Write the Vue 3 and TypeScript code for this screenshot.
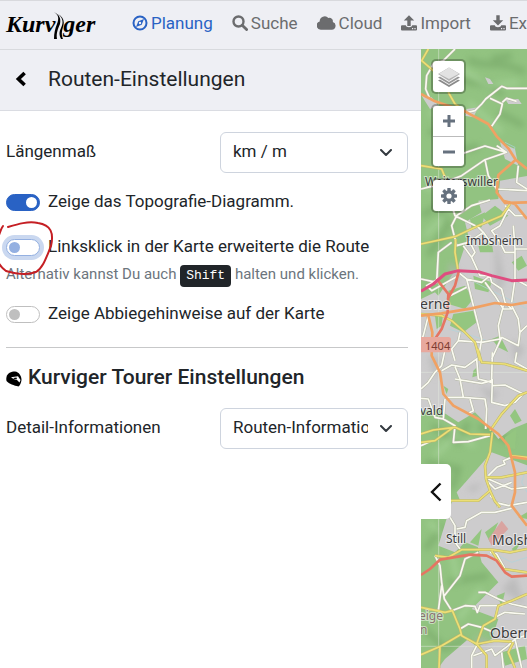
<script setup lang="ts">
import { ref } from 'vue'

interface NavItem {
  label: string
  icon: string
  active?: boolean
}

interface Place {
  name: string
  x: number
  y: number
  kind: string
}

const navItems: NavItem[] = [
  { label: 'Planung', icon: 'compass', active: true },
  { label: 'Suche', icon: 'search' },
  { label: 'Cloud', icon: 'cloud' },
  { label: 'Import', icon: 'upload' },
  { label: 'Export', icon: 'download' },
]

const places: Place[] = [
  { name: 'Weiterswiller', x: 4, y: 137, kind: 'village' },
  { name: 'Imbsheim', x: 45, y: 196, kind: 'village' },
  { name: 'erne', x: -1, y: 260, kind: 'town' },
  { name: 'vald', x: -1, y: 366, kind: 'village' },
  { name: 'Still', x: 25, y: 494, kind: 'village' },
  { name: 'Molsheim', x: 71, y: 496, kind: 'town' },
  { name: 'eige', x: -2, y: 571, kind: 'region' },
  { name: 'n', x: -1, y: 585, kind: 'region' },
  { name: 'Obernai', x: 69, y: 589, kind: 'town' },
]

const unit = ref('km')
const detail = ref('route')
const showTopography = ref(true)
const clickExtends = ref(false)
const showTurns = ref(false)
</script>

<template>
  <div class="page">
    <header class="topbar">
      <a class="brand" href="#" aria-label="Kurviger">
        <span>Kurv</span>
        <svg class="road" width="11" height="28" viewBox="0 0 11 28" aria-hidden="true">
          <path d="M1 0C6 3 6 7 4 12C2 17 1 21 1 27H4C3 21 5 17 7 12C8 7 7 3 1 0Z" />
          <path d="M5 2C11 7 10 11 8 16C6 20 6 23 8 27H10C8 22 9 19 10 15C12 9 10 5 5 2Z" />
        </svg>
        <span>ger</span>
      </a>
      <nav class="nav">
        <a v-for="item in navItems" :key="item.label" href="#" :class="['nav-link', { active: item.active }]">
          <svg v-if="item.icon === 'compass'" width="16" height="16" viewBox="0 0 16 16">
            <circle cx="8" cy="8" r="6.5" fill="none" stroke="currentColor" stroke-width="2" />
            <path fill="currentColor" fill-rule="evenodd" d="M12 4L9.7 9.7L4 12L6.3 6.3ZM8 6.8A1.2 1.2 0 1 0 8 9.2A1.2 1.2 0 0 0 8 6.8Z" />
          </svg>
          <svg v-else-if="item.icon === 'search'" width="16" height="16" viewBox="0 0 16 16">
            <circle cx="6.5" cy="6.5" r="5" fill="none" stroke="currentColor" stroke-width="2.4" />
            <path d="M10.2 10.2L14.6 14.6" stroke="currentColor" stroke-width="2.8" stroke-linecap="round" />
          </svg>
          <svg v-else-if="item.icon === 'cloud'" width="19" height="16" viewBox="0 0 19 16">
            <path fill="currentColor" d="M15.8 7A3.4 3.4 0 0 0 11.4 3A5 5 0 0 0 2.7 6.4A4.3 4.3 0 0 0 4.3 14.8H14.8A4 4 0 0 0 15.8 7Z" />
          </svg>
          <svg v-else width="16" height="16" viewBox="0 0 16 16">
            <path v-if="item.icon === 'upload'" fill="currentColor" d="M6.3 11V5.5H2.8L8 .2L13.2 5.5H9.7V11Z" />
            <path v-else fill="currentColor" d="M6.3 .2V5.2H2.8L8 10.6L13.2 5.2H9.7V.2Z" />
            <path fill="currentColor" fill-rule="evenodd" d="M1 10.3H4.8C4.8 12.8 11.2 12.8 11.2 10.3H15Q16 10.3 16 11.3V14.5Q16 15.5 15 15.5H1Q0 15.5 0 14.5V11.3Q0 10.3 1 10.3ZM11 13.1V14.3H12.2V13.1ZM13.4 13.1V14.3H14.6V13.1Z" />
          </svg>
          <span>{{ item.label }}</span>
        </a>
      </nav>
    </header>

    <div class="workspace">
      <section class="panel">
        <div class="panel-head">
          <button class="back" type="button" aria-label="Zurück">
            <svg width="12" height="16" viewBox="0 0 12 16">
              <path d="M9.6 2L3.4 8L9.6 14" fill="none" stroke="currentColor" stroke-width="3.6" />
            </svg>
          </button>
          <h1>Routen-Einstellungen</h1>
        </div>

        <form class="settings" @submit.prevent>
          <div class="field">
            <label for="unit">Längenmaß</label>
            <span class="select">
              <select id="unit" v-model="unit">
                <option value="km">km / m</option>
                <option value="mi">mi / ft</option>
              </select>
              <svg width="12" height="8" viewBox="0 0 12 8" aria-hidden="true">
                <path d="M1 1L6 6L11 1" />
              </svg>
            </span>
          </div>

          <div class="switch-row first">
            <input id="topography" v-model="showTopography" class="switch" type="checkbox">
            <label for="topography">Zeige das Topografie-Diagramm.</label>
          </div>

          <div class="switch-row marked">
            <input id="click-extends" v-model="clickExtends" class="switch focused" type="checkbox">
            <label for="click-extends">Linksklick in der Karte erweiterte die Route</label>
            <svg class="marker" width="54" height="56" viewBox="0 0 54 56" aria-hidden="true">
              <path d="M3 5C0 9 0 14 -4 20C-7 30 -4 43 6 50C16 53 28 54 36 51C43 47 46 37 51 25C54 12 51 4 38 2C28 0 18 3 8 6" />
            </svg>
          </div>
          <p class="hint">Alternativ kannst Du auch <kbd>Shift</kbd> halten und klicken.</p>

          <div class="switch-row">
            <input id="turns" v-model="showTurns" class="switch" type="checkbox">
            <label for="turns">Zeige Abbiegehinweise auf der Karte</label>
          </div>

          <hr>

          <h2>
            <svg width="16" height="16" viewBox="0 0 16 16" aria-hidden="true">
              <path d="M.5 6C1.500 2 5 .5 9 .5C13 1 15.500 5 15.500 9C15 12 14 14.500 12.500 15.500C8 14.500 3 13 .5 10Q0 8 .5 6Z" />
              <path class="visor" d="M5 6.200L12 5.200L14.500 9L13.500 11.500L11 9L7.500 8Z" />
              <path d="M7 7L10.500 6.600L11 8.200L8.500 8Z" />
            </svg>
            Kurviger Tourer Einstellungen
          </h2>

          <div class="field">
            <label for="detail">Detail-Informationen</label>
            <span class="select">
              <select id="detail" v-model="detail">
                <option value="route">Routen-Informationen</option>
                <option value="none">Keine</option>
              </select>
              <svg width="12" height="8" viewBox="0 0 12 8" aria-hidden="true">
                <path d="M1 1L6 6L11 1" />
              </svg>
            </span>
          </div>
        </form>
      </section>

      <section class="map" aria-label="Karte">
        <svg class="map-canvas" width="100%" height="100%">
          <defs>
            <filter id="soft" x="-20%" y="-20%" width="140%" height="140%">
              <feGaussianBlur stdDeviation="9" />
            </filter>
            <path id="minor-roads" d="M120 0L85 35L55 45L35 80L32 120L45 150M150 192L180 185L200 165L212 150L260 112L275 118L336 118M225 148L262 165L255 195L230 232M262 160L275 148L305 157M130 318L210 291L275 310L210 332L140 380L60 410L18 420M210 332L220 380L245 420L336 425M245 290L260 300L275 310M310 350L305 400L336 420M105 450L120 500L190 535L205 550L160 580L125 590L110 530L125 500L170 470L225 453M165 580L180 610L170 625L145 590M110 580L70 610L65 700L18 690M70 690L35 710L50 725L130 680M130 670L155 690L170 750L200 870L190 930M155 690L200 700L225 680L230 700L260 720L270 760L290 780L265 780L240 740L210 700M170 625L195 680L225 680M295 530L300 600L300 690L290 760M280 480L255 530L230 545L255 580L270 610L300 610M205 550L230 585M270 470L300 500L325 500M300 600L336 600M300 690L336 710M265 770L250 830L255 870L200 880L130 875L110 900L120 935M290 770L310 810L315 850L336 830M315 850L310 890L260 865L230 930M135 850L130 875M105 740L155 715M40 800L25 860L18 870M90 903L80 950L60 970L40 1000L18 1020M80 965L110 948L150 955L185 930L190 990L230 1000M120 953L135 990L145 1045L95 1045M120 990L200 1003L230 995L232 910M232 990L230 1060L270 1070L300 1060L325 1035L270 1008L232 1010M145 1045L210 1050L215 1080L212 1140M165 1050L175 1085L155 1095M90 1050L85 1110L60 1105L40 1050L18 1048M85 1110L120 1130L115 1180L160 1178L225 1160M290 1225L265 1235L270 1245L245 1255L220 1280M220 1290L290 1320L336 1315M225 1340L245 1360L250 1375M215 1295L240 1320L290 1300M240 1360L280 1370L336 1360M305 910L300 940L336 960M18 1190L50 1175M105 1405L120 1430L120 1480L135 1500M125 1440L150 1435L155 1415L200 1390L240 1390L290 1378M60 1520L75 1550L80 1600L88 1650L110 1685L150 1670L180 1672L187 1690L195 1670L265 1670M80 1610L70 1685L30 1680M88 1640L135 1580L150 1530L190 1510M190 1630L210 1630L250 1650L290 1665L336 1675M225 1510L245 1515L270 1560M135 1740L160 1725L200 1735L235 1750M240 1705L270 1690L330 1695M185 1790L170 1820L170 1857M175 1820L230 1800L240 1820L280 1790L300 1770L320 1857M260 1810L265 1857M300 1770L330 1760" />
            <path id="secondary-roads" d="M40 0L20 35L55 65M18 350L80 360L90 385M100 130L120 165L155 190M18 585L120 563L190 530L260 500L285 465M130 670L120 610L122 570M18 795L80 800L110 815L150 850L180 880L195 935M18 1155L55 1143L120 1135L165 1155L225 1157M18 1180L60 1175L115 1135M188 900L200 940L270 945L336 965M225 1145L260 1095L310 1040L336 1030M232 1150L225 1210L210 1250L213 1290L225 1325L240 1357L255 1375M210 1285L260 1285L336 1270M285 1220L336 1225M18 1360L100 1355L190 1355L225 1325M60 1520L100 1525L140 1502L230 1502L285 1510L336 1500M230 1505L265 1560L336 1570M18 1675L90 1690L112 1685L135 1740L140 1760L185 1785L240 1775L290 1778M18 1817L80 1790L140 1755M185 1785L205 1730L240 1710L250 1670L290 1655L336 1635M75 1792L72 1857M185 1785L215 1820L215 1857M295 1780L280 1810L300 1857" />
          </defs>
          <g transform="scale(0.33333) translate(-18 0)">
            <!-- land cover -->
            <rect x="0" y="0" width="2400" height="2400" fill="#92c381" />
            <g filter="url(#soft)" fill="none" stroke="#78a969" stroke-width="20" opacity=".65">
              <path d="M160 30C200 60 260 30 330 70M130 90C190 110 230 90 260 140M40 250C90 240 120 330 190 290M230 30L290 20M250 190L325 230M20 500L70 470L100 530L40 620M50 1130L130 1180L160 1120M30 1500L80 1440L120 1510M190 1130L290 1180M100 1600L220 1580M30 1740L90 1800L150 1770M30 1240L130 1260L110 1320" />
            </g>
            <g filter="url(#soft)" fill="none" stroke="#a9d69b" stroke-width="14" opacity=".7">
              <path d="M140 60L220 110L310 100M40 190L140 210M160 160L260 250M30 420L130 390M30 560L90 500M60 1220L120 1160L180 1190M40 1420L100 1470L130 1600M200 1620L130 1710" />
            </g>
            <g fill="#cdcccd">
              <path d="M255 395L340 380V1120L290 1140L250 1170L220 1130L180 1090L130 1120L70 1080L18 1085V750L60 730L70 740L130 650L160 560L150 520L200 490L190 455L250 450Z" />
              <path d="M340 1250L230 1210L160 1290L125 1330L150 1390L100 1430L120 1480L180 1460L200 1540L250 1600L170 1680L250 1710L230 1770L160 1810L190 1857H340Z" />
              <path d="M110 1360L200 1340L250 1400L230 1510L150 1480L120 1510L70 1490Z" />
              <path d="M90 1830L160 1770L250 1857H70Z" />
              <path d="M20 140L50 145L70 170L45 180ZM155 180L190 175L175 205L150 200ZM210 85L225 90L235 105L220 105ZM270 150L310 150L320 165L280 165ZM255 280L300 300L310 350L270 330Z" />
            </g>
            <g fill="#94c680">
              <path d="M100 725L150 710L175 750L150 780L100 765ZM115 795L175 785L185 820L145 850L105 830ZM165 510L210 490L200 535L170 540ZM190 590L230 580L235 610L195 610ZM175 680L230 700L220 730L180 720ZM230 870L255 860L280 910L250 895ZM290 640L320 620L336 650L310 665ZM175 965L190 950L188 980L172 985ZM285 1100L300 1080L320 1115L300 1125ZM60 800L85 790L80 830L65 840ZM270 1165L305 1140L300 1200L270 1195ZM200 500L240 470L280 500L225 530ZM85 1010L100 1020L95 1035Z" />
              <path d="M165 1480L200 1440L190 1490ZM210 1450L250 1420L225 1480ZM290 1500L320 1475L300 1510ZM245 1640L270 1630L260 1670ZM260 1810L330 1790L336 1830L270 1850ZM310 1405L336 1390V1410Z" />
            </g>
            <g fill="#b5b5b5" opacity=".7" filter="url(#soft)">
              <path d="M240 550L270 700L240 740ZM100 640L140 670L110 720ZM40 920L80 930L60 990ZM190 1010L250 1030L230 1060ZM290 870L330 900L300 940ZM300 1580L330 1670L260 1620ZM150 1320L200 1300L180 1330ZM180 1760L230 1780L200 1800Z" />
            </g>
            <path fill="#d9a4a0" d="M220 1470L260 1415L280 1440L230 1490Z" />
            <g fill="none" stroke="#aed4dc" stroke-width="2">
              <path d="M150 685L220 720L290 755L336 780M100 840L170 860L230 880M270 280L300 295L290 330M336 1250L320 1300L336 1330M230 1510L290 1540L336 1525" />
            </g>
            <path d="M71 0V1857M18 970H340M18 1792H340" stroke="#e4ece0" stroke-width="2" opacity=".75" />

            <use href="#minor-roads" class="road-line minor-edge" />
            <use href="#minor-roads" class="road-line minor" />
            <use href="#secondary-roads" class="road-line secondary-edge" />
            <use href="#secondary-roads" class="road-line secondary" />

            <!-- primary roads and motorways -->
            <path class="road-line primary" d="M18 135L60 157L145 185L220 225L245 262L280 298L302 332L250 378L245 430L270 462L336 460M302 332L336 360M265 455L300 465L336 510M18 800L80 793L170 778L240 762L290 768L336 760M40 800L52 850L50 920L75 970L85 1035L115 1070L190 1110L250 1155L280 1190L290 1230L300 1270L300 1330L290 1370L336 1430M285 1223L336 1230" />
            <path class="road-line trunk" d="M65 690L100 735L98 790L80 840L60 870M132 665L120 710L98 750M18 1578L45 1560L75 1532L165 1517L215 1520L245 1535L270 1570L290 1583L336 1580" />
            <path class="road-line motorway" d="M18 727L55 705L90 675L130 665L190 668L230 680L290 695L336 693" />
            <rect x="10" y="864" width="98" height="46" rx="8" fill="#e8a99e" />
          </g>
          <text v-for="place in places" :key="place.name" :x="place.x" :y="place.y" :class="place.kind">{{ place.name }}</text>
          <text x="4" y="301" class="road-ref">1404</text>
        </svg>

        <div class="controls">
          <button class="control single" type="button" aria-label="Ebenen">
            <svg width="24" height="24" viewBox="0 0 24 24">
              <path fill="#8a8a8a" d="M1 15.500L4 14L12 19L20 14L23 15.500L12 22Z" />
              <path fill="#f5f5f5" d="M2 14L12 20L22 14L12 11Z" />
              <path fill="#969696" d="M1 12.500L4 11L12 16L20 11L23 12.500L12 19Z" />
              <path fill="#f5f5f5" d="M2 11L12 17L22 11Z" />
              <path fill="#b4b4b4" d="M1 9L12 2.500L23 9L12 16Z" />
              <path fill="#e2e2e2" d="M2 8.700L12 2.500L22 8.700L12 14Z" />
            </svg>
          </button>
          <div class="control zoom">
            <button type="button" aria-label="Vergrößern">
              <svg width="12" height="12" viewBox="0 0 12 12"><path d="M6 0V12M0 6H12" /></svg>
            </button>
            <button type="button" aria-label="Verkleinern">
              <svg width="12" height="12" viewBox="0 0 12 12"><path d="M0 6H12" /></svg>
            </button>
          </div>
          <button class="control single" type="button" aria-label="Karteneinstellungen">
            <svg width="16" height="16" viewBox="-8 -8 16 16">
              <g fill="#66717e">
                <rect v-for="n in 4" :key="n" x="-1.700" y="-8" width="3.400" height="16" rx=".6" :transform="`rotate(${n * 45})`" />
                <circle r="5.800" />
              </g>
              <circle r="2.600" fill="#fff" />
            </svg>
          </button>
        </div>

        <button class="collapse" type="button" aria-label="Seitenleiste einklappen">
          <svg width="12" height="20" viewBox="0 0 12 20">
            <path d="M10.500 1.500L2 10L10.500 18.500" fill="none" stroke="#111" stroke-width="2.400" />
          </svg>
        </button>
      </section>
    </div>
  </div>
</template>

<style>
body {
  background: #fff;
}
</style>

<style scoped>
.page {
  display: flex;
  flex-direction: column;
  min-height: 100vh;
  overflow: hidden;
  color: #212529;
  font-family: Roboto, "Liberation Sans", sans-serif;
  font-size: 17px;
}

.page * {
  box-sizing: border-box;
}

button {
  margin: 0;
  padding: 0;
  border: 0;
  background: none;
  color: inherit;
  font: inherit;
}

svg {
  flex: none;
  display: block;
}

.topbar {
  display: flex;
  align-items: center;
  height: 50px;
  padding-left: 6px;
  border-top: 1px solid #d8d9dd;
  border-bottom: 1px solid #d8dade;
  background: #eeeff4;
  overflow: hidden;
}

.brand {
  flex: none;
  display: flex;
  align-items: center;
  width: 126px;
  padding-bottom: 2px;
  color: #000;
  font: italic bold 24px/30px "Liberation Serif", serif;
  text-decoration: none;
}

.road {
  margin: 4px -1px 0 -2px;
}

.nav {
  display: flex;
  gap: 19px;
  padding-bottom: 4px;
}

.nav-link {
  flex: none;
  display: flex;
  align-items: center;
  gap: 3px;
  color: #6b6c6e;
  font-size: 17px;
  line-height: 24px;
  text-decoration: none;
}

.nav-link.active {
  color: #2962c4;
}

.workspace {
  flex: 1;
  display: flex;
}

.panel {
  flex: none;
  width: 421px;
  max-width: 80%;
}

.panel-head {
  display: flex;
  align-items: center;
  gap: 21px;
  height: 61px;
  padding: 0 15px 3px;
  border-bottom: 1px solid #dadce2;
  background: #eeeff4;
}

.back {
  color: #000;
}

h1 {
  margin: 0;
  font-size: 21px;
  font-weight: 400;
  line-height: 28px;
}

.settings {
  padding: 21px 13px 21px 6px;
}

.field {
  display: flex;
  align-items: center;
  justify-content: space-between;
}

.field label {
  padding-bottom: 3px;
}

.select {
  display: grid;
  align-items: center;
  width: 188px;
}

.select > * {
  grid-area: 1 / 1;
}

.select > svg {
  justify-self: end;
  margin-right: 16px;
  pointer-events: none;
}

.select path {
  fill: none;
  stroke: #343a40;
  stroke-width: 2;
  stroke-linecap: round;
  stroke-linejoin: round;
}

select {
  width: 100%;
  height: 41px;
  padding: 0 39px 3px 12px;
  border: 1px solid #ced4de;
  border-radius: 6px;
  appearance: none;
  background: #fff;
  color: inherit;
  font: inherit;
}

.switch-row {
  display: flex;
  align-items: center;
  gap: 8px;
  line-height: 24px;
}

.switch-row label {
  padding-bottom: 2px;
}

.first {
  margin: 16px 0 19px;
}

.marked {
  position: relative;
}

.marker {
  position: absolute;
  top: -13px;
  left: -6px;
  overflow: hidden;
  pointer-events: none;
}

.marker path {
  fill: none;
  stroke: #c51f24;
  stroke-width: 2;
  stroke-linecap: round;
}

.switch {
  flex: none;
  display: flex;
  align-items: center;
  width: 34px;
  height: 17px;
  margin: 0;
  padding: 0 2px;
  border: 1px solid #bfbfbf;
  border-radius: 9px;
  appearance: none;
  background: #fff;
}

.switch::before {
  content: "";
  width: 11px;
  height: 11px;
  border-radius: 50%;
  background: #bfbfbf;
}

.switch:checked {
  justify-content: flex-end;
  border-color: #2962c4;
  background: #2962c4;
}

.switch:checked::before {
  background: #fff;
}

.focused {
  border-color: #94b0e1;
  box-shadow: 0 0 0 4px #cad8f0;
}

.focused::before {
  background: #94b0e1;
}

.hint {
  margin: 1px 0 14px;
  color: #6c757d;
  font-size: 15px;
  line-height: 26px;
}

kbd {
  display: inline-block;
  padding: 0 6px;
  border-radius: 4px;
  background: #212529;
  color: #fff;
  font: 13px/22px "Liberation Mono", monospace;
}

hr {
  margin: 20px 0 16px;
  border: 0;
  border-top: 1px solid #c7c8c9;
}

h2 {
  display: flex;
  align-items: center;
  gap: 6px;
  margin: 0 0 18px;
  font-size: 21px;
  font-weight: 500;
  line-height: 26px;
}

h2 svg {
  margin-top: 3px;
}

.visor {
  fill: #fff;
}

.map {
  position: relative;
  flex: 1;
  min-width: 0;
  margin-top: -1px;
  overflow: hidden;
}

.map-canvas {
  position: absolute;
  inset: 0;
}

.road-line {
  fill: none;
  stroke-linejoin: round;
}

.minor-edge {
  stroke: #b3b6a5;
  stroke-width: 8;
}

.minor {
  stroke: #fafaf0;
  stroke-width: 5;
}

.secondary-edge {
  stroke: #bdb667;
  stroke-width: 8;
}

.secondary {
  stroke: #ecdf76;
  stroke-width: 5;
}

.primary {
  stroke: #f0a163;
  stroke-width: 8;
}

.trunk {
  stroke: #e57562;
  stroke-width: 8;
}

.motorway {
  stroke: #df4d80;
  stroke-width: 9;
}

text {
  fill: #3d3d3d;
  stroke: rgba(255, 255, 255, 0.5);
  stroke-width: 2px;
  paint-order: stroke;
  font-family: "Noto Sans", sans-serif;
  font-size: 12px;
}

.town {
  font-size: 14px;
}

.region {
  fill: #8a7470;
}

.road-ref {
  fill: #7c3c31;
  stroke: none;
  font-size: 11px;
}

.controls {
  position: absolute;
  top: 10px;
  left: 10px;
  display: flex;
  flex-direction: column;
  gap: 10px;
}

.control {
  border: 2px solid rgba(0, 0, 0, 0.25);
  border-radius: 5px;
  background: #fff;
  background-clip: padding-box;
}

.single,
.zoom button {
  display: flex;
  align-items: center;
  justify-content: center;
}

.single {
  width: 35px;
  height: 35px;
}

.zoom button {
  width: 31px;
  height: 30px;
}

.zoom button + button {
  border-top: 1px solid #bbb;
}

.zoom path {
  stroke: #66717e;
  stroke-width: 3;
}

.collapse {
  position: absolute;
  top: 415px;
  left: 0;
  display: flex;
  align-items: center;
  justify-content: center;
  width: 30px;
  height: 55px;
  border-radius: 0 5px 5px 0;
  background: #fff;
}
</style>
